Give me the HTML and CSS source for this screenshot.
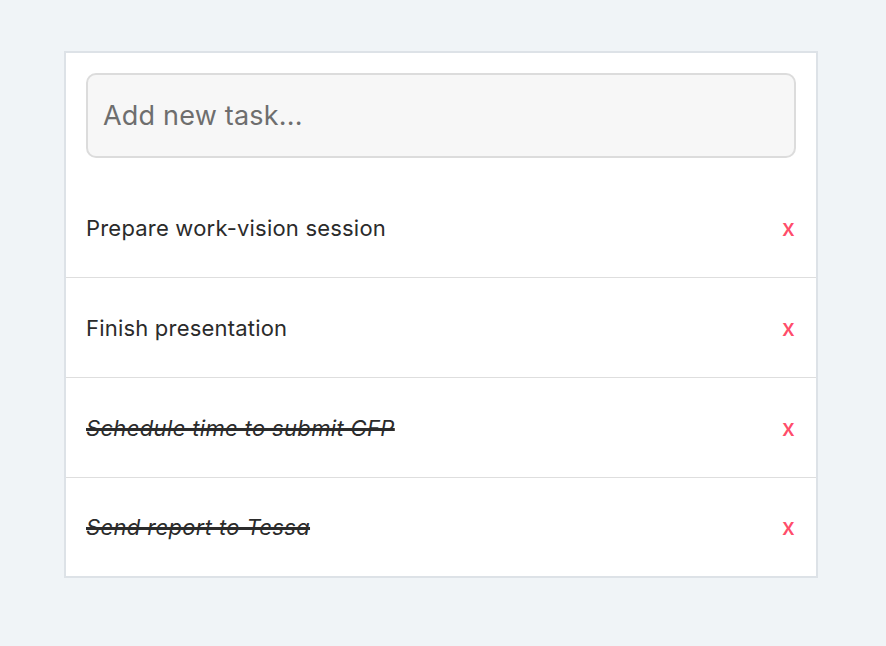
FILE: index.html
```html
<!DOCTYPE html>
<html>
<head>
<meta charset="utf-8">
<link rel="stylesheet" href="styles.css">
</head>
<body>
<div class="card">
  <div class="input-wrap">
    <input class="new-task" type="text" placeholder="Add new task...">
  </div>
  <ul class="list">
    <li class="item"><span class="label">Prepare work-vision session</span><span class="remove">x</span></li>
    <li class="item"><span class="label">Finish presentation</span><span class="remove">x</span></li>
    <li class="item done"><span class="label">Schedule time to submit CFP</span><span class="remove">x</span></li>
    <li class="item done"><span class="label">Send report to Tessa</span><span class="remove">x</span></li>
  </ul>
</div>
</body>
</html>
```

FILE: styles.css
```css
html, body {
  margin: 0;
  padding: 0;
  background: #f0f4f7;
  font-family: Inter, "Noto Sans", sans-serif;
}
body {
  padding: 51px 0 0 64px;
}
.card {
  width: 754px;
  box-sizing: border-box;
  background: #fff;
  border: 2px solid #dde2e7;
}
.input-wrap {
  padding: 20px;
}
.new-task {
  display: block;
  width: 100%;
  box-sizing: border-box;
  height: 85px;
  border: 2px solid #dcdcdc;
  border-radius: 10px;
  background: #f7f7f7;
  padding: 0 15px;
  font-family: Inter, "Noto Sans", sans-serif;
  font-size: 27px;
  letter-spacing: 0.2px;
  color: #333;
  outline: none;
}
.new-task::placeholder {
  color: #6e6e6e;
}
.list {
  list-style: none;
  margin: 0;
  padding: 0;
}
.item {
  display: flex;
  align-items: center;
  justify-content: space-between;
  height: 99px;
  padding: 0 21px 0 20px;
  border-bottom: 1px solid #dedede;
  font-size: 22px;
  letter-spacing: 0.2px;
  color: #2b2b2b;
}
.item:last-child {
  border-bottom: none;
  height: 98px;
}
.done .label {
  font-style: italic;
  letter-spacing: 0.35px;
  text-decoration: line-through;
  text-decoration-thickness: 2.5px;
}
.remove {
  color: #ff4d6a;
  font-size: 23px;
  font-weight: 500;
}
```
